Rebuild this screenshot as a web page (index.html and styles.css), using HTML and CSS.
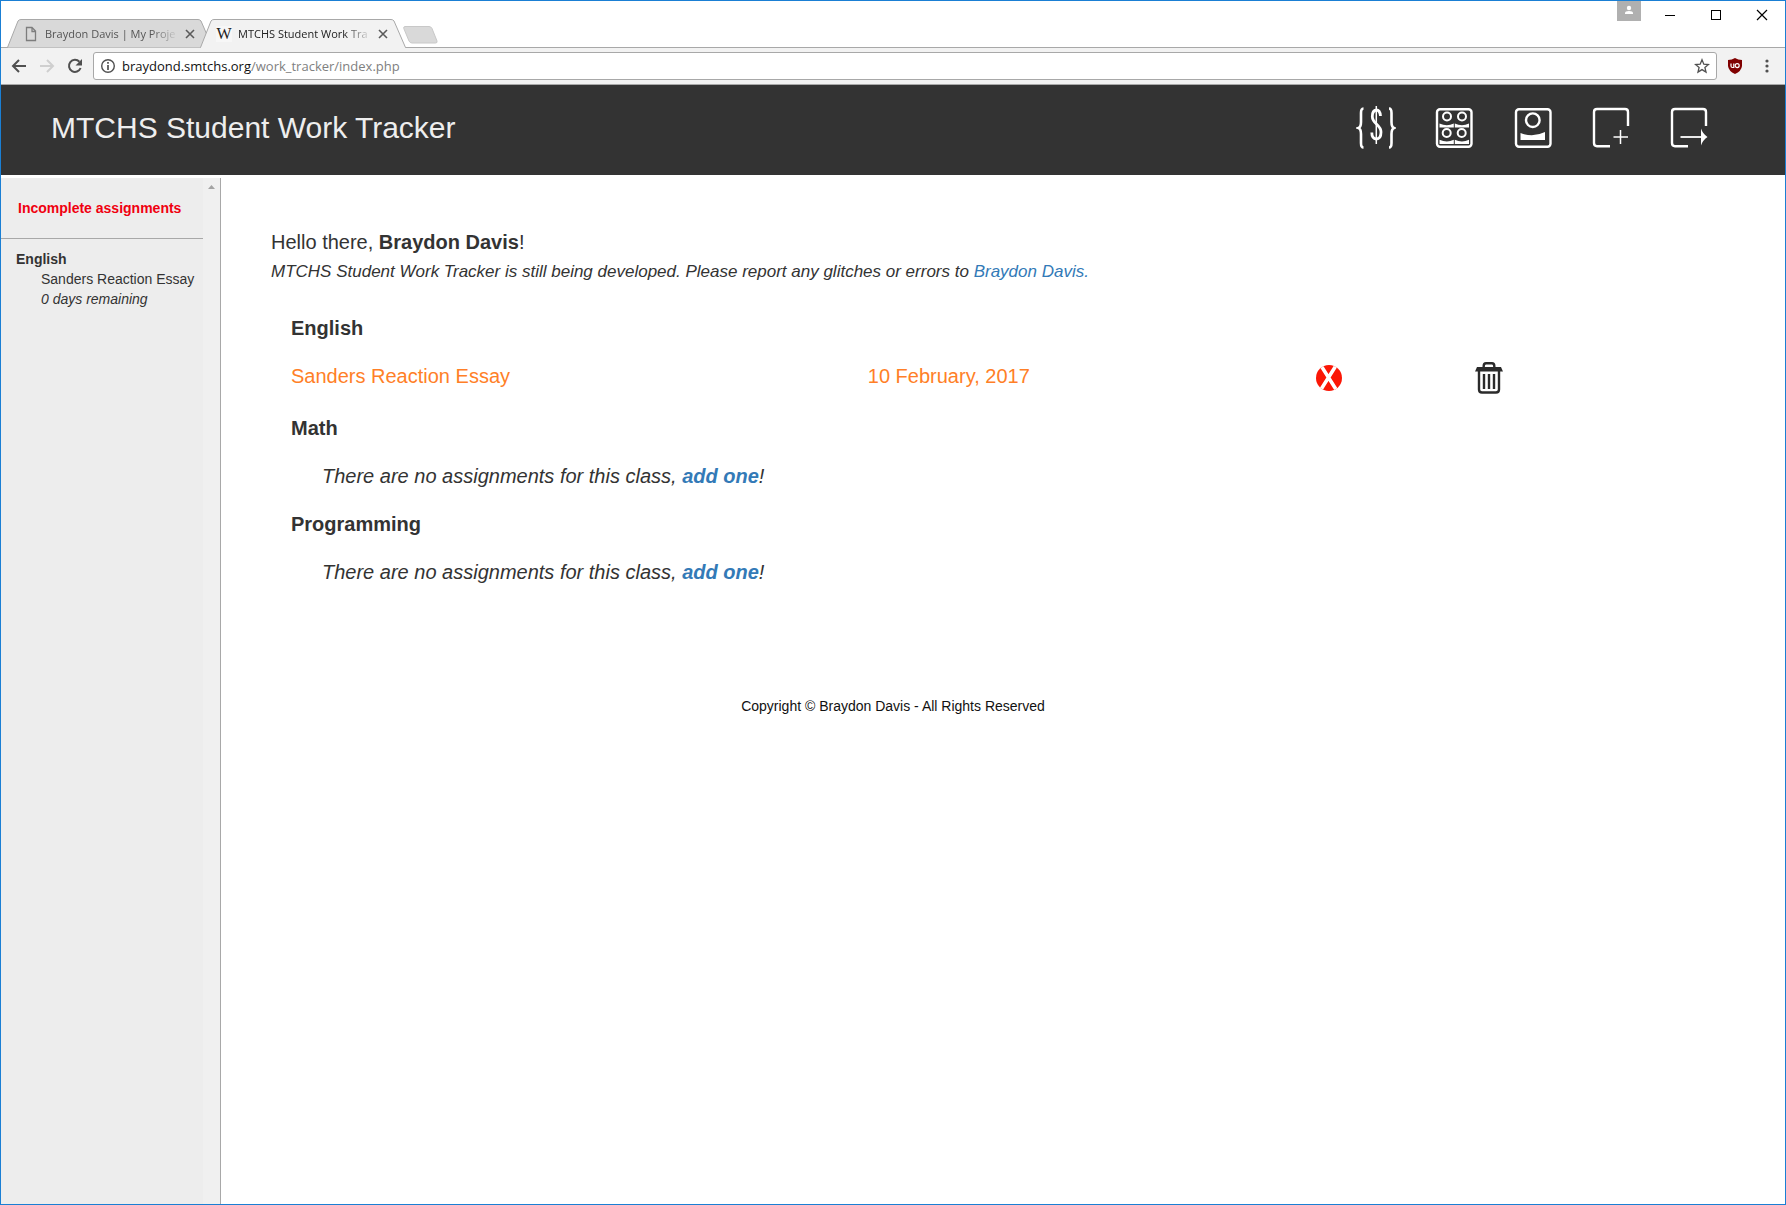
FILE: index.html
```html
<!DOCTYPE html>
<html lang="en">
<head>
<meta charset="utf-8">
<title>MTCHS Student Work Tracker</title>
<link rel="stylesheet" href="styles.css">
</head>
<body>
<div class="window">
  <div class="titlebar">
    <div class="tabs">
      <div class="tab">
        <svg class="tab-shape" viewBox="0 0 206 29" preserveAspectRatio="none" aria-hidden="true"><path d="M0.5 28.5L11 2Q12 .5 14 .5H191Q193 .5 194 2L205.5 28.5" fill="#d9d9d9" stroke="#a8a8a8"/></svg>
        <svg class="tab-icon" width="16" height="16" viewBox="0 0 16 16" aria-hidden="true"><path d="M3.500 1.500H9L12.500 5V14.500H3.500ZM9 1.500V5.500H12.500" fill="none" stroke="#7d7d7d" stroke-width="1.300"/></svg>
        <span class="tab-title">Braydon Davis | My Proje</span>
        <button class="tab-close" aria-label="Close tab"><svg width="10" height="10" viewBox="0 0 10 10"><path d="M1 1L9 9M9 1L1 9" stroke="#5a5a5a" stroke-width="1.600"/></svg></button>
      </div>
      <div class="tab tab-active">
        <svg class="tab-shape" viewBox="0 0 206 29" preserveAspectRatio="none" aria-hidden="true"><path d="M0 29L.5 28.500L11 2Q12 .5 14 .5H191Q193 .5 194 2L205.500 28.500L206 29" fill="#f2f2f2" stroke="#a8a8a8"/></svg>
        <span class="favicon" aria-hidden="true">W</span>
        <span class="tab-title">MTCHS Student Work Tra</span>
        <button class="tab-close" aria-label="Close tab"><svg width="10" height="10" viewBox="0 0 10 10"><path d="M1 1L9 9M9 1L1 9" stroke="#5a5a5a" stroke-width="1.600"/></svg></button>
      </div>
      <button class="new-tab" aria-label="New tab"><svg width="36" height="18" viewBox="0 0 36 18"><path d="M2 .5H26Q28 .5 29 2.500L34 15Q34.500 17 32.500 17H9Q7 17 6 15L.8 2.500Q.3 .5 2 .5Z" fill="#d9d9d9" stroke="#c8c8c8"/></svg></button>
    </div>
    <div class="window-controls">
      <button class="user" aria-label="User"><svg width="24" height="20" viewBox="0 0 24 20"><rect width="24" height="20" fill="#b0b0b0"/><circle cx="12" cy="7" r="2.200" fill="#fff"/><path d="M8 13V12Q8 10 12 10T16 12V13Z" fill="#fff"/></svg></button>
      <button aria-label="Minimize"><svg width="12" height="12" viewBox="0 0 12 12"><path d="M1 6.500H11" stroke="#000"/></svg></button>
      <button aria-label="Maximize"><svg width="12" height="12" viewBox="0 0 12 12"><rect x="1.500" y="1.500" width="9" height="9" fill="none" stroke="#000"/></svg></button>
      <button aria-label="Close"><svg width="12" height="12" viewBox="0 0 12 12"><path d="M1 1L11 11M11 1L1 11" stroke="#000" stroke-width="1.200"/></svg></button>
    </div>
  </div>

  <div class="toolbar">
    <button aria-label="Back"><svg width="16" height="16" viewBox="0 0 16 16"><path d="M15 8H2.500M8 2L2 8L8 14" fill="none" stroke="#505050" stroke-width="2"/></svg></button>
    <button aria-label="Forward"><svg width="16" height="16" viewBox="0 0 16 16"><path d="M1 8H13.500M8 2L14 8L8 14" fill="none" stroke="#cfcfcf" stroke-width="2"/></svg></button>
    <button aria-label="Reload"><svg width="16" height="16" viewBox="0 0 16 16"><path d="M13.600 10A6 6 0 1 1 12.400 3.800" fill="none" stroke="#505050" stroke-width="2"/><path d="M15 1V7.500H8.500Z" fill="#505050"/></svg></button>
    <div class="omnibox">
      <svg width="16" height="16" viewBox="0 0 16 16" aria-hidden="true"><circle cx="8" cy="8" r="6.300" fill="none" stroke="#505050" stroke-width="1.400"/><path d="M8 7V12M8 4V5.800" stroke="#505050" stroke-width="1.700"/></svg>
      <div class="url" role="textbox" aria-label="Address" contenteditable="plaintext-only" spellcheck="false">braydond.smtchs.org<span class="url-path">/work_tracker/index.php</span></div>
      <button aria-label="Bookmark this page"><svg width="16" height="16" viewBox="0 0 16 16"><path d="M8 1.800L9.800 6.200L14.500 6.500L10.900 9.500L12 14.100L8 11.600L4 14.100L5.100 9.500L1.500 6.500L6.200 6.200Z" fill="none" stroke="#505050" stroke-width="1.300"/></svg></button>
    </div>
    <button class="shield" aria-label="uBlock Origin"><svg width="16" height="16" viewBox="0 0 16 16"><path d="M8 0Q11 2 15 2V8Q14.500 13 8 16Q1.500 13 1 8V2Q5 2 8 0Z" fill="#800000"/><path d="M4 5.500V8Q4 9.500 5.500 9.500H6.800V5.500" fill="none" stroke="#fff" stroke-width="1.200"/><circle cx="10.200" cy="7.600" r="2" fill="none" stroke="#fff" stroke-width="1.200"/></svg></button>
    <button aria-label="Menu"><svg width="16" height="16" viewBox="0 0 16 16" fill="#505050"><circle cx="8" cy="3" r="1.600"/><circle cx="8" cy="8" r="1.600"/><circle cx="8" cy="13" r="1.600"/></svg></button>
  </div>

  <header class="site-header">
    <h1>MTCHS Student Work Tracker</h1>
    <nav class="site-nav">
      <a href="#money" aria-label="Code"><svg width="40" height="48" viewBox="0 0 40 48"><g fill="none" stroke="#fff"><path d="M7.500 4.500Q5 4.500 5 9V18Q5 23 2.500 24Q5 25 5 30V39Q5 43.500 7.500 43.500" stroke-width="2.600"/><path d="M33 4.500Q35.500 4.500 35.500 9V18Q35.500 23 38 24Q35.500 25 35.500 30V39Q35.500 43.500 33 43.500" stroke-width="2.600"/><path d="M24.500 12Q24 6 20.300 6Q16.300 6.500 16.300 12.500C16.300 20 25 20.500 25 28Q25 35 20.300 35Q15.800 34.500 15.800 28.500" stroke-width="2.800"/><path d="M20.300 2V40" stroke-width="1.500"/></g></svg></a>
      <a href="#classes" aria-label="Classes"><svg width="40" height="48" viewBox="0 0 40 48"><rect x="3" y="5.200" width="34.500" height="37.500" rx="3" fill="none" stroke="#fff" stroke-width="2.400"/><g fill="none" stroke="#fff" stroke-width="2"><circle cx="13" cy="12.500" r="4"/><circle cx="28" cy="12.500" r="4"/><circle cx="12.700" cy="29" r="4"/><circle cx="27.700" cy="29" r="4"/></g><g fill="#fff"><path d="M5.500 19.500Q13 23 19.800 19.500V23.500H5.500ZM20.800 19.500Q28 23 35 19.500V23.500H20.800ZM5.500 35.800Q13 39 19.800 35.800V40H5.500ZM20.800 35.800Q28 39 35 35.800V40H20.800Z"/></g></svg></a>
      <a href="#profile" aria-label="Profile"><svg width="40" height="48" viewBox="0 0 40 48"><rect x="4" y="5.200" width="34.500" height="37.500" rx="3" fill="none" stroke="#fff" stroke-width="2.400"/><circle cx="20.800" cy="16.200" r="6.800" fill="none" stroke="#fff" stroke-width="2.400"/><path d="M8.500 29Q21 34 33 28V36H8.500Z" fill="#fff"/></svg></a>
      <a href="#add" aria-label="Add assignment"><svg width="40" height="48" viewBox="0 0 40 48"><path d="M20 42.200H7Q4 42.200 4 39V8Q4 5 7 5H35Q38 5 38 8V22" fill="none" stroke="#fff" stroke-width="2.400"/><path d="M23.500 33H38M30.500 26V40" stroke="#fff" stroke-width="1.500"/></svg></a>
      <a href="#logout" aria-label="Log out"><svg width="40" height="48" viewBox="0 0 40 48"><path d="M20 42.200H7Q4 42.200 4 39V8Q4 5 7 5H35Q38 5 38 8V22" fill="none" stroke="#fff" stroke-width="2.400"/><path d="M12.500 33H34" stroke="#fff" stroke-width="1.800"/><path d="M33 24.500Q34.500 29.500 39.500 33Q34.500 36.500 33 41.500Z" fill="#fff"/></svg></a>
    </nav>
  </header>

  <div class="page">
    <aside class="sidebar">
      <div class="sidebar-body">
        <h2>Incomplete assignments</h2>
        <div class="due">
          <h3>English</h3>
          <p>Sanders Reaction Essay</p>
          <p><em>0 days remaining</em></p>
        </div>
      </div>
      <div class="scrollbar" aria-hidden="true"><svg width="7" height="4" viewBox="0 0 7 4"><path d="M0 4L3.500 0L7 4Z" fill="#a3a3a3"/></svg></div>
    </aside>
    <main>
      <p class="greeting">Hello there, <strong>Braydon Davis</strong>!</p>
      <p class="notice">MTCHS Student Work Tracker is still being developed. Please report any glitches or errors to <a href="#contact">Braydon Davis.</a></p>
      <section class="course">
        <h2>English</h2>
        <table class="work">
          <tr>
            <td class="work-name">Sanders Reaction Essay</td>
            <td class="work-date">10 February, 2017</td>
            <td class="work-status"><button aria-label="Incomplete"><svg width="28" height="32" viewBox="0 0 28 32"><defs><clipPath id="disc"><circle cx="13" cy="16" r="13"/></clipPath></defs><g clip-path="url(#disc)"><rect width="28" height="32" fill="#fb1706"/><path d="M4 2L21 29M21 2L4 29" stroke="#fff" stroke-width="3.600"/></g></svg></button></td>
            <td class="work-delete"><button aria-label="Delete"><svg width="28" height="32" viewBox="0 0 28 32"><g fill="none" stroke="#2b2b2b"><path d="M8.700 6V4Q8.700 1.300 11 1.300H17Q19.300 1.300 19.300 4V6" stroke-width="2.400"/><path d="M4 9V27.500Q4 30.500 7 30.500H21Q24 30.500 24 27.500V9" stroke-width="2.400"/><path d="M9 12V27M14 12V27M19 12V27" stroke-width="2.400"/></g><path d="M2 5H26L28 9.500H0Z" fill="#2b2b2b"/></svg></button></td>
          </tr>
        </table>
      </section>
      <section class="course">
        <h2>Math</h2>
        <p class="empty">There are no assignments for this class, <a href="#add">add one</a>!</p>
      </section>
      <section class="course">
        <h2>Programming</h2>
        <p class="empty">There are no assignments for this class, <a href="#add">add one</a>!</p>
      </section>
    </main>
    <footer>Copyright © Braydon Davis - All Rights Reserved</footer>
  </div>
</div>
</body>
</html>
```
FILE: styles.css
```css
* { box-sizing: border-box; }

body {
  margin: 0;
  font-family: "Liberation Sans", Arial, sans-serif;
  font-size: 14px;
  line-height: 20px;
  color: #333;
  background: #fff;
}

h1, h2, h3, p { margin: 0; }

svg { display: block; }

a { color: #337ab7; text-decoration: none; }

button {
  display: flex;
  padding: 0;
  border: 0;
  background: none;
}

.window {
  display: flex;
  flex-direction: column;
  min-height: 100vh;
  border: 1px solid #1a7fd4;
}

/* Browser chrome */
.titlebar {
  display: flex;
  justify-content: space-between;
  height: 47px;
  border-bottom: 1px solid #a8a8a8;
  font-family: "Open Sans", sans-serif;
}

.tabs {
  display: flex;
  align-items: flex-end;
  padding-left: 6px;
  margin-bottom: -1px;
}

.tab {
  position: relative;
  z-index: 0;
  display: flex;
  align-items: center;
  width: 206px;
  height: 29px;
  padding: 0 18px 0 16px;
  color: #555;
}

.tab-active {
  z-index: 1;
  margin-left: -13px;
  color: #222;
}

.tab-shape {
  position: absolute;
  inset: 0;
  z-index: -1;
  width: 100%;
  height: 100%;
}

.favicon {
  width: 16px;
  font: 16px/16px "Liberation Serif", serif;
  text-align: center;
  color: #222;
  background: #f7f7f7;
}

.tab-title {
  flex: 1;
  margin: 0 6px;
  font-size: 11px;
  white-space: nowrap;
  mask-image: linear-gradient(to left, transparent, #000 28px);
}

.new-tab { margin: 0 0 4px -3px; }

.window-controls {
  display: flex;
  gap: 34px;
  align-items: flex-start;
  padding-right: 17px;
}

.window-controls button { padding-top: 8px; }

.window-controls .user { padding: 0; margin-right: -11px; }

.toolbar {
  display: flex;
  gap: 12px;
  align-items: center;
  height: 37px;
  padding: 0 10px;
  background: #f2f2f2;
  border-bottom: 1px solid #a8a8a8;
}

.omnibox {
  display: flex;
  flex: 1;
  gap: 6px;
  align-items: center;
  height: 28px;
  padding: 0 6px;
  margin-left: -2px;
  background: #fff;
  border: 1px solid #a8a8a8;
  border-radius: 3px;
}

.url {
  flex: 1;
  font-family: "Open Sans", sans-serif;
  font-size: 13px;
  color: #111;
}

.url-path { color: #808080; }

.shield { margin: 0 4px 0 -2px; }

/* Site header */
.site-header {
  display: flex;
  align-items: center;
  justify-content: space-between;
  height: 90px;
  padding: 0 77px 4px 50px;
  background: #333;
}

.site-header h1 {
  font-size: 30px;
  font-weight: 400;
  line-height: 40px;
  color: #eee;
}

.site-nav { display: flex; gap: 38px; }

/* Page body */
.page {
  display: grid;
  flex: 1;
  grid-template-columns: 220px 1fr;
  grid-template-rows: auto 1fr;
}

.sidebar {
  display: flex;
  grid-row: 1 / 3;
  grid-column: 1;
  margin-top: 3px;
  background: #ededed;
  border-right: 1px solid #a8a8a8;
}

.sidebar-body { flex: 1; }

.sidebar h2 {
  padding: 20px 0 20px 17px;
  font-size: 14px;
  color: #f00010;
  white-space: nowrap;
  border-bottom: 1px solid #a8a8a8;
}

.due { padding: 10px 0 0 15px; }

.due h3 { font-size: 14px; }

.due p { padding-left: 25px; white-space: nowrap; }

.scrollbar {
  width: 17px;
  padding: 7px 5px;
  background: #f0f0f0;
}

main {
  grid-row: 1;
  grid-column: 2;
  padding: 53px 52px 0 50px;
  font-size: 20px;
  line-height: 28px;
}

.notice {
  margin-bottom: 26px;
  font-size: 17px;
  font-style: italic;
  line-height: 32px;
}

.course { padding: 0 0 20px 20px; }

.course h2 { margin-bottom: 20px; font-size: 20px; }

.work {
  width: 100%;
  table-layout: fixed;
  border-collapse: collapse;
  color: #ff7f27;
}

.work td { padding: 0; vertical-align: top; }

.work .work-name { width: 40%; }

.work .work-date { width: 30%; }

.work .work-status { width: 11%; padding-left: 16px; }

.work .work-delete { padding-left: 16px; }

.empty { padding-left: 31px; font-style: italic; }

.empty a { font-weight: 700; }

footer {
  z-index: 1;
  grid-row: 2;
  grid-column: 1 / 3;
  padding-top: 90px;
  color: #111;
  text-align: center;
}
```
